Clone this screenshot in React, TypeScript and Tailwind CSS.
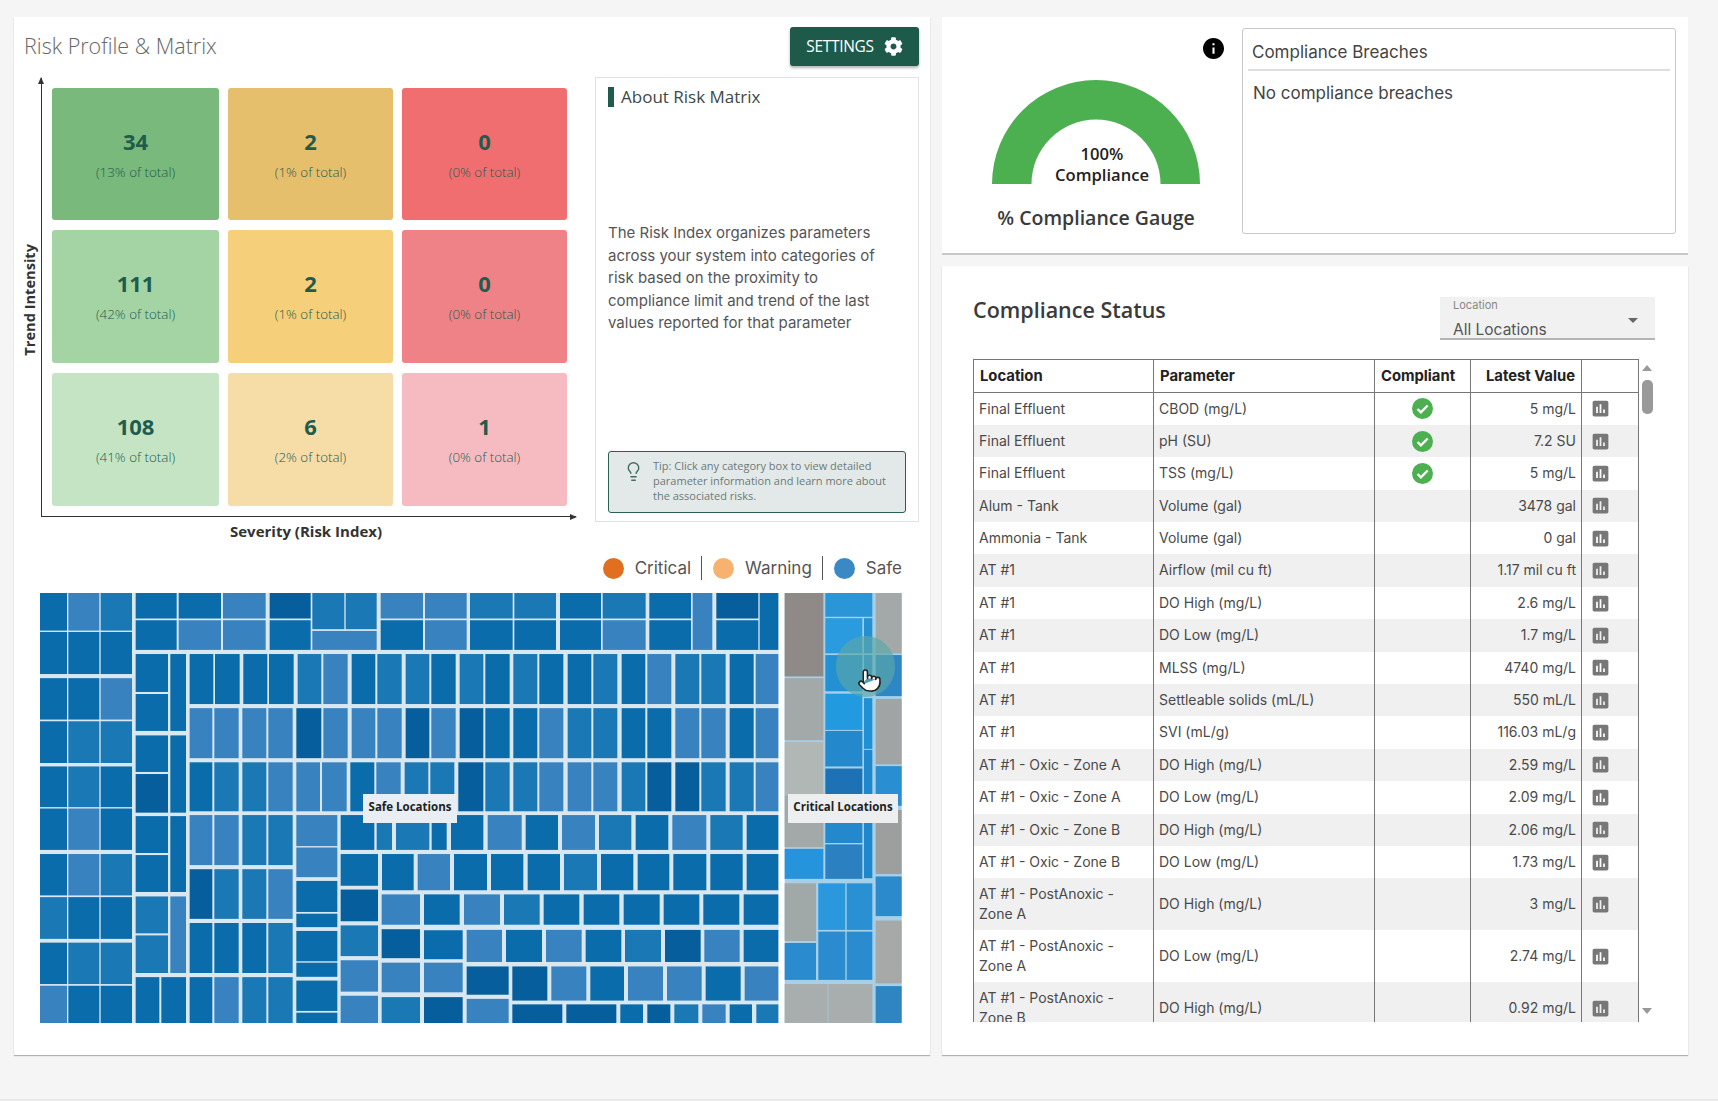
import { Lightbulb, Pointer } from 'lucide-react'
import { FaCog } from 'react-icons/fa'

/* ── Risk matrix data ── */

const matrix = [
  { value: '34', note: '(13% of total)', bg: 'bg-[#79b97b]' },
  { value: '2', note: '(1% of total)', bg: 'bg-[#e6bf6c]' },
  { value: '0', note: '(0% of total)', bg: 'bg-[#f16e70]' },
  { value: '111', note: '(42% of total)', bg: 'bg-[#a4d4a4]' },
  { value: '2', note: '(1% of total)', bg: 'bg-[#f6cf7a]' },
  { value: '0', note: '(0% of total)', bg: 'bg-[#ef8286]' },
  { value: '108', note: '(41% of total)', bg: 'bg-[#c4e4c4]' },
  { value: '6', note: '(2% of total)', bg: 'bg-[#f6dda8]' },
  { value: '1', note: '(0% of total)', bg: 'bg-[#f6bbc0]' },
]

/* ── Treemap data, in chart units (3 per px across, 2.9 per px down) ── */

const shades: Record<string, string> = {
  d: '#0a6cab',
  D: '#065f9c',
  m: '#1a78b5',
  l: '#3883bf',
}

type Tile = [number, number, number, number, string]
type Cell = [number, number, string]

const row = (y0: number, y1: number, cells: Cell[], off = 0): Tile[] =>
  cells.map(([x0, x1, c]) => [x0 + off, x1 + off, y0, y1, c])

const R = 1380

const safeTiles: Tile[] = [
  // left block
  ...row(153, 262, [[120, 201, 'd'], [205, 298, 'l'], [302, 396, 'm']]),
  ...row(266, 388, [[120, 201, 'd'], [205, 298, 'd'], [302, 396, 'd']]),
  ...row(400, 520, [[120, 201, 'd'], [205, 298, 'd'], [302, 396, 'l']]),
  ...row(525, 646, [[120, 201, 'd'], [205, 298, 'm'], [302, 396, 'm']]),
  ...row(656, 774, [[120, 201, 'd'], [205, 298, 'm'], [302, 396, 'd']]),
  ...row(778, 898, [[120, 201, 'd'], [205, 298, 'l'], [302, 396, 'd']]),
  ...row(910, 1030, [[120, 201, 'd'], [205, 298, 'l'], [302, 396, 'm']]),
  ...row(1035, 1156, [[120, 201, 'm'], [205, 298, 'd'], [302, 396, 'd']]),
  ...row(1167, 1287, [[120, 201, 'd'], [205, 298, 'm'], [302, 396, 'm']]),
  ...row(1292, 1400, [[120, 201, 'l'], [205, 298, 'd'], [302, 396, 'd']]),
  // top band
  ...row(153, 227, [[407, 530, 'd'], [536, 663, 'd'], [669, 797, 'l'], [809, 932, 'D'], [1142, 1269, 'l'], [1275, 1400, 'l']]),
  ...row(232, 318, [[407, 530, 'd'], [536, 663, 'l'], [669, 797, 'l'], [809, 932, 'd'], [1142, 1269, 'd'], [1275, 1400, 'l']]),
  ...row(153, 258, [[937, 1033, 'm'], [1037, 1130, 'm']]),
  ...row(263, 318, [[937, 1130, 'l']]),
  ...row(153, 227, [[30, 158, 'm'], [163, 288, 'm'], [300, 423, 'd'], [428, 557, 'm'], [568, 693, 'd'], [769, 895, 'D']], R),
  ...row(232, 318, [[30, 158, 'd'], [163, 288, 'd'], [300, 423, 'd'], [428, 557, 'l'], [568, 693, 'd'], [769, 895, 'd']], R),
  ...row(153, 318, [[698, 757, 'l'], [899, 955, 'd']], R),
  // narrow stack beside the left block
  ...row(330, 440, [[407, 504, 'd']]),
  ...row(446, 553, [[407, 504, 'd']]),
  ...row(330, 553, [[511, 558, 'd']]),
  ...row(566, 672, [[407, 504, 'd']]),
  ...row(678, 790, [[407, 504, 'D']]),
  ...row(566, 790, [[511, 558, 'd']]),
  ...row(800, 907, [[407, 504, 'd']]),
  ...row(913, 1020, [[407, 504, 'd']]),
  ...row(800, 1020, [[511, 558, 'd']]),
  ...row(1033, 1140, [[407, 504, 'm']]),
  ...row(1146, 1255, [[407, 504, 'm']]),
  ...row(1033, 1255, [[511, 558, 'l']]),
  ...row(1267, 1400, [[407, 478, 'd'], [484, 558, 'd']]),
  // tall pairs
  ...row(330, 475, [[569, 640, 'd'], [645, 719, 'd'], [730, 802, 'd'], [807, 881, 'd'], [893, 964, 'm'], [970, 1043, 'l'], [1055, 1126, 'd'], [1132, 1205, 'm'], [1217, 1288, 'm'], [1294, 1367, 'd']]),
  ...row(330, 475, [[-1, 70, 'm'], [76, 149, 'd'], [160, 232, 'm'], [238, 310, 'd'], [323, 394, 'd'], [400, 472, 'm'], [485, 556, 'd'], [562, 634, 'l'], [646, 718, 'm'], [724, 797, 'm'], [809, 881, 'd'], [887, 955, 'l']], R),
  ...row(487, 632, [[569, 637, 'l'], [643, 716, 'l'], [727, 799, 'l'], [805, 878, 'l'], [889, 964, 'D'], [970, 1043, 'l'], [1055, 1126, 'l'], [1132, 1205, 'l'], [1217, 1288, 'D'], [1294, 1367, 'l']]),
  ...row(487, 632, [[-1, 70, 'D'], [76, 149, 'd'], [160, 232, 'd'], [238, 310, 'l'], [323, 394, 'm'], [400, 472, 'm'], [485, 556, 'd'], [562, 634, 'd'], [646, 718, 'l'], [724, 797, 'l'], [809, 881, 'd'], [887, 955, 'l']], R),
  ...row(644, 786, [[569, 637, 'd'], [643, 716, 'm'], [727, 799, 'm'], [805, 878, 'l'], [889, 960, 'l'], [966, 1040, 'l'], [1051, 1123, 'd'], [1129, 1202, 'l'], [1214, 1285, 'm'], [1291, 1363, 'm']]),
  ...row(644, 786, [[-5, 70, 'D'], [76, 149, 'm'], [160, 232, 'm'], [238, 310, 'l'], [323, 394, 'l'], [400, 472, 'l'], [485, 556, 'm'], [562, 634, 'D'], [646, 718, 'D'], [724, 797, 'm'], [809, 881, 'm'], [887, 955, 'l']], R),
  ...row(797, 942, [[569, 637, 'l'], [643, 716, 'l'], [727, 799, 'm'], [805, 878, 'm']]),
  ...row(954, 1098, [[569, 637, 'D'], [643, 716, 'm'], [727, 799, 'm'], [805, 878, 'l']]),
  ...row(1110, 1255, [[569, 637, 'd'], [643, 716, 'd'], [727, 799, 'd'], [805, 878, 'm']]),
  ...row(1267, 1400, [[569, 637, 'd'], [643, 716, 'l'], [727, 799, 'm'], [805, 878, 'm']]),
  // single column
  ...row(797, 887, [[889, 1012, 'l']]),
  ...row(891, 977, [[889, 1012, 'l']]),
  ...row(988, 1078, [[889, 1012, 'd']]),
  ...row(1083, 1122, [[889, 1012, 'd']]),
  ...row(1133, 1221, [[889, 1012, 'd']]),
  ...row(1225, 1266, [[889, 1012, 'd']]),
  ...row(1277, 1365, [[889, 1012, 'd']]),
  ...row(1370, 1400, [[889, 1012, 'd']]),
  // small squares, lower right
  ...row(797, 898, [[1022, 1123, 'd'], [1130, 1176, 'm'], [1188, 1288, 'm'], [1295, 1340, 'd'], [1353, 1450, 'd']]),
  ...row(797, 898, [[83, 185, 'l'], [197, 294, 'd'], [306, 405, 'l'], [417, 514, 'm'], [527, 625, 'd'], [637, 739, 'l'], [751, 848, 'm'], [860, 955, 'd']], R),
  ...row(910, 1015, [[1146, 1241, 'd'], [1253, 1350, 'l'], [1362, 1461, 'd']]),
  ...row(910, 1015, [[93, 190, 'd'], [203, 300, 'd'], [312, 411, 'm'], [423, 520, 'd'], [533, 628, 'd'], [640, 739, 'd'], [751, 848, 'd'], [860, 955, 'd']], R),
  ...row(910, 1002, [[1022, 1134, 'd']]),
  ...row(1013, 1105, [[1022, 1134, 'D']]),
  ...row(1117, 1206, [[1022, 1134, 'm']]),
  ...row(1218, 1309, [[1022, 1134, 'l']]),
  ...row(1321, 1400, [[1022, 1134, 'l']]),
  ...row(1027, 1115, [[1145, 1260, 'l'], [1272, 1379, 'd']]),
  ...row(1027, 1115, [[12, 120, 'l'], [132, 239, 'm'], [251, 358, 'd'], [371, 478, 'd'], [491, 599, 'd'], [611, 718, 'd'], [730, 838, 'd'], [851, 955, 'd']], R),
  ...row(1128, 1212, [[1145, 1260, 'D']]),
  ...row(1131, 1215, [[1272, 1388, 'd']]),
  ...row(1130, 1223, [[20, 126, 'l'], [138, 246, 'd'], [258, 365, 'l'], [377, 484, 'd'], [495, 603, 'm'], [615, 722, 'D'], [733, 839, 'l'], [851, 955, 'd']], R),
  ...row(1225, 1311, [[1145, 1260, 'l'], [1272, 1388, 'l']]),
  ...row(1236, 1318, [[20, 146, 'D']], R),
  ...row(1236, 1335, [[157, 262, 'D'], [274, 379, 'l'], [391, 492, 'd'], [504, 609, 'l'], [621, 725, 'l'], [737, 842, 'd'], [854, 955, 'l']], R),
  ...row(1325, 1400, [[1145, 1260, 'm'], [1272, 1388, 'D']]),
  ...row(1330, 1400, [[20, 146, 'l']], R),
  ...row(1346, 1400, [[157, 307, 'D'], [319, 469, 'D'], [481, 549, 'd'], [562, 631, 'D'], [643, 715, 'm'], [727, 797, 'l'], [809, 876, 'd'], [889, 955, 'm']], R),
]

const criticalTiles: Tile[] = [
  ...row(153, 395, [[974, 1090, '#8f8a88']], R),
  ...row(400, 580, [[974, 1090, '#a3a9a9']], R),
  ...row(585, 740, [[974, 1090, '#b0b7b4']], R),
  ...row(740, 890, [[974, 1090, '#a3a8a8']], R),
  ...row(895, 982, [[974, 1090, '#2594dc']], R),
  ...row(153, 222, [[1096, 1237, '#2a96d8']], R),
  ...row(226, 328, [[1096, 1207, '#2b9be0'], [1212, 1237, '#2590d0']], R),
  ...row(333, 438, [[1096, 1207, '#2390d4'], [1212, 1237, '#2590d0']], R),
  ...row(153, 328, [[1247, 1325, '#a2a9a8']], R),
  ...row(333, 452, [[1247, 1325, '#2f86c4']], R),
  ...row(445, 550, [[1096, 1207, '#229ae0']], R),
  ...row(458, 605, [[1212, 1237, '#2090d4']], R),
  ...row(553, 656, [[1096, 1207, '#2388cc']], R),
  ...row(608, 980, [[1212, 1237, '#1f88cc']], R),
  ...row(662, 760, [[1096, 1207, '#1c72b4']], R),
  ...row(770, 878, [[1096, 1207, '#2388cc']], R),
  ...row(882, 982, [[1096, 1207, '#2a80c0']], R),
  ...row(460, 650, [[1247, 1325, '#a0a4a4']], R),
  ...row(655, 770, [[1247, 1325, '#2a8fd2']], R),
  ...row(782, 968, [[1247, 1325, '#9c9f9e']], R),
  ...row(975, 1090, [[1247, 1325, '#2a8acc']], R),
  ...row(1103, 1285, [[1247, 1325, '#a7a9a9']], R),
  ...row(1293, 1400, [[1247, 1325, '#2f84c2']], R),
  ...row(995, 1162, [[974, 1068, '#a0a8a8']], R),
  ...row(1168, 1275, [[974, 1068, '#2a8ccf']], R),
  ...row(995, 1130, [[1075, 1156, '#2b98de'], [1160, 1237, '#2a90d4']], R),
  ...row(1135, 1275, [[1075, 1156, '#2a8ccf'], [1160, 1237, '#2a8ccf']], R),
  ...row(1287, 1400, [[974, 1103, '#a8aeae'], [1105, 1237, '#a8aeae']], R),
]

/* ── Compliance table data ── */

const rows = [
  ['Final Effluent', 'CBOD (mg/L)', true, '5 mg/L'],
  ['Final Effluent', 'pH (SU)', true, '7.2 SU'],
  ['Final Effluent', 'TSS (mg/L)', true, '5 mg/L'],
  ['Alum - Tank', 'Volume (gal)', false, '3478 gal'],
  ['Ammonia - Tank', 'Volume (gal)', false, '0 gal'],
  ['AT #1', 'Airflow (mil cu ft)', false, '1.17 mil cu ft'],
  ['AT #1', 'DO High (mg/L)', false, '2.6 mg/L'],
  ['AT #1', 'DO Low (mg/L)', false, '1.7 mg/L'],
  ['AT #1', 'MLSS (mg/L)', false, '4740 mg/L'],
  ['AT #1', 'Settleable solids (mL/L)', false, '550 mL/L'],
  ['AT #1', 'SVI (mL/g)', false, '116.03 mL/g'],
  ['AT #1 - Oxic - Zone A', 'DO High (mg/L)', false, '2.59 mg/L'],
  ['AT #1 - Oxic - Zone A', 'DO Low (mg/L)', false, '2.09 mg/L'],
  ['AT #1 - Oxic - Zone B', 'DO High (mg/L)', false, '2.06 mg/L'],
  ['AT #1 - Oxic - Zone B', 'DO Low (mg/L)', false, '1.73 mg/L'],
  ['AT #1 - PostAnoxic - Zone A', 'DO High (mg/L)', false, '3 mg/L'],
  ['AT #1 - PostAnoxic - Zone A', 'DO Low (mg/L)', false, '2.74 mg/L'],
  ['AT #1 - PostAnoxic - Zone B', 'DO High (mg/L)', false, '0.92 mg/L'],
] as const

/* ── Small drawings ── */

function ChartIcon() {
  return (
    <svg viewBox="0 0 24 24" className="size-[21px] fill-[#777]">
      <path d="M19 3H5c-1.1 0-2 .9-2 2v14c0 1.1.9 2 2 2h14c1.1 0 2-.9 2-2V5c0-1.1-.9-2-2-2zM9 17H7v-7h2v7zm4 0h-2V7h2v10zm4 0h-2v-4h2v4z" />
    </svg>
  )
}

function CheckIcon() {
  return (
    <svg viewBox="0 0 21 21" className="mx-auto size-[21px]">
      <circle cx="10.5" cy="10.5" r="10.5" fill="#4caf50" />
      <path d="M5.5 11l3.4 3.3 6.8-6.8" fill="none" stroke="#fff" strokeWidth="2.4" />
    </svg>
  )
}

function Gauge() {
  return (
    <svg viewBox="0 0 208 105" className="h-[105px] w-[208px]">
      <path d="M0 105A104 104 0 0 1 208 105H168.5A64.5 64.5 0 0 0 39.5 105Z" fill="#4caf50" />
    </svg>
  )
}

/* ── Left card ── */

function RiskMatrix() {
  return (
    <div className="mt-px flex flex-col pl-[7px]">
      <div className="flex">
        <div className="flex w-5 items-center justify-start pt-[5px]">
          <span className="rotate-180 text-[14.6px] leading-4 font-bold text-[#333] [writing-mode:vertical-rl]">
            Trend Intensity
          </span>
        </div>
        <div className="relative h-[439px] w-[535px] border-b border-l border-[#333] pt-2.5 pl-2.5">
          <span className="absolute -top-[1px] -left-[4px] border-x-[3.5px] border-b-[7px] border-x-transparent border-b-[#333]" />
          <span className="absolute -right-[1px] -bottom-[4px] border-y-[3.5px] border-l-[7px] border-y-transparent border-l-[#333]" />
          <div className="grid grid-cols-[167px_165px_165px] grid-rows-[132px_133px_133px] gap-x-[9px] gap-y-2.5">
            {matrix.map((cell, i) => (
              <div key={i} className={`${cell.bg} flex flex-col items-center rounded-[3px] pt-[38px] text-[#1f5c4d]`}>
                <span className="text-[22px] leading-[30px] font-bold">{cell.value}</span>
                <span className="mt-2 text-[13.4px] leading-4 font-light">{cell.note}</span>
              </div>
            ))}
          </div>
        </div>
      </div>
      <div className="ml-5 w-[530px] pt-1 text-center text-[15px] leading-5 font-bold text-[#333]">
        Severity (Risk Index)
      </div>
    </div>
  )
}

function AboutPanel() {
  return (
    <div className="ml-[19px] flex h-[445px] w-[324px] flex-col border border-[#e2e2e2] px-[12px] pt-[9px] pb-2">
      <div className="flex h-5 items-center gap-[7px]">
        <span className="h-5 w-1.5 bg-[#1f5c4d]" />
        <span className="text-[17px] text-[#3c4a46]">About Risk Matrix</span>
      </div>
      <p className="mt-[115px] w-[282px] font-['Inter'] text-[15px] leading-[22.6px] text-[#555]">
        The Risk Index organizes parameters across your system into categories of risk based on the
        proximity to compliance limit and trend of the last values reported for that parameter
      </p>
      <div className="mt-auto flex h-[62px] items-start gap-[9px] rounded-[3px] border border-[#2b5f55] bg-[#e3e9e8] pt-[6px] pl-[14px]">
        <Lightbulb size={21} strokeWidth={1.6} className="mt-[3px] shrink-0 text-[#3c6e62]" />
        <p className="w-[234px] text-[11px] leading-[15px] text-[#6c7a78]">
          Tip: Click any category box to view detailed parameter information and learn more about
          the associated risks.
        </p>
      </div>
    </div>
  )
}

function Legend() {
  const items = [
    { label: 'Critical', dot: 'bg-[#e07020]' },
    { label: 'Warning', dot: 'bg-[#f8b26f]' },
    { label: 'Safe', dot: 'bg-[#3a88c4]' },
  ]
  return (
    <div className="mt-[15px] flex h-6 justify-end pr-[28px] font-['Inter'] text-[17px] leading-6 text-[#555]">
      {items.map((item, i) => (
        <div key={item.label} className={`flex items-center gap-[11px] ${i > 0 ? 'ml-[10px] border-l border-[#555] pl-[11px]' : ''}`}>
          <span className={`${item.dot} size-[21px] rounded-full`} />
          <span>{item.label}</span>
        </div>
      ))}
    </div>
  )
}

function Treemap() {
  return (
    <div className="relative mt-[13px] ml-[26px] h-[430px] w-[862px]">
      <svg viewBox="120 153 2586 1247" preserveAspectRatio="none" className="block h-[430px] w-[862px]">
        <rect x="120" y="153" width="2216" height="1247" fill="#d9e7f0" />
        <rect x="2354" y="153" width="351" height="1247" fill="#a6cfe8" />
        {safeTiles.map(([x0, x1, y0, y1, c], i) => (
          <rect key={i} x={x0} y={y0} width={x1 - x0} height={y1 - y0} fill={shades[c]} />
        ))}
        {criticalTiles.map(([x0, x1, y0, y1, c], i) => (
          <rect key={i} x={x0} y={y0} width={x1 - x0} height={y1 - y0} fill={c} />
        ))}
      </svg>
      <span className="absolute top-[201px] left-[323px] flex h-[29px] w-[94px] items-center justify-center bg-[#e8eef3] pb-[3px] text-[11.5px] font-bold text-[#222]">
        Safe Locations
      </span>
      <span className="absolute top-[201px] left-[748px] flex h-[29px] w-[110px] items-center justify-center bg-[#eceef0] pb-[3px] text-[11.5px] font-bold text-[#222]">
        Critical Locations
      </span>
      <span className="absolute top-[43px] left-[796px] h-[61px] w-[59px] rounded-full bg-[#5aa8a8]/65" />
      <Pointer size={25} fill="#fff" strokeWidth={1.5} className="absolute top-[75px] left-[817px] text-[#222]" />
    </div>
  )
}

function RiskCard() {
  return (
    <section className="h-[1038px] w-[916px] bg-white pt-2.5 shadow-[0_1px_1px_rgba(0,0,0,0.28)]">
      <div className="flex items-center justify-between pr-[11px] pl-2.5">
        <h1 className="text-[21.5px] font-light text-[#666]">Risk Profile &amp; Matrix</h1>
        <button className="flex h-[39px] w-[129px] items-center justify-center gap-[10px] rounded-[3px] bg-[#1d5a4a] text-[15.5px] tracking-[-0.3px] text-white shadow-[0_2px_3px_rgba(0,0,0,0.3)]">
          SETTINGS
          <FaCog size={19} />
        </button>
      </div>
      <div className="mt-[11px] flex items-start">
        <RiskMatrix />
        <AboutPanel />
      </div>
      <Legend />
      <Treemap />
    </section>
  )
}

/* ── Right cards ── */

function GaugeCard() {
  return (
    <section className="flex h-[238px] w-[746px] border-b-2 border-[#c9c9c9] bg-white pt-[11px]">
      <div className="flex w-[300px] flex-col">
        <div className="mt-[10px] flex justify-end pr-[18px]">
          <svg viewBox="2 2 20 20" className="size-[21px] fill-black">
            <path d="M12 2C6.48 2 2 6.48 2 12s4.48 10 10 10 10-4.48 10-10S17.52 2 12 2zm1 15h-2v-6h2v6zm0-8h-2V7h2v2z" />
          </svg>
        </div>
        <div className="relative mt-[20px] ml-[50px] h-[105px] w-[208px]">
          <Gauge />
          <div className="absolute top-[65px] left-[6px] w-[208px] text-center text-[16.6px] leading-[20.5px] font-semibold text-[#222]">
            100%
            <br />
            Compliance
          </div>
        </div>
        <div className="mt-[19px] ml-[50px] w-[208px] text-center text-[19.5px] font-semibold whitespace-nowrap text-[#3a3a3a]">
          % Compliance Gauge
        </div>
      </div>
      <div className="h-[206px] w-[434px] rounded-[3px] border border-[#c8c8c8] px-[5px] pt-[11px] font-['Inter'] text-[17px] text-[#444]">
        <div className="border-b-2 border-[#dedede] px-1 pb-[5px] leading-[24px]">Compliance Breaches</div>
        <div className="mt-2.5 px-[5px] leading-[24px]">No compliance breaches</div>
      </div>
    </section>
  )
}

function StatusTable() {
  const head = 'border-t border-b border-r border-[#777] px-[6px] text-[14.8px] font-bold text-[#222]'
  const cell = 'border-r border-[#777] px-[5px]'
  return (
    <div className="mt-[19px] flex">
      <div className="h-[663px] w-[666px] overflow-hidden">
        <table className="w-[665px] table-fixed border-collapse border-l border-[#777] font-['Inter'] text-[14px] leading-[20.5px] text-[#4a4a4a]">
          <colgroup>
            <col className="w-[180px]" />
            <col className="w-[221px]" />
            <col className="w-[96px]" />
            <col className="w-[111px]" />
            <col className="w-[57px]" />
          </colgroup>
          <thead>
            <tr className="h-[33px]">
              <th className={`${head} text-left`}>Location</th>
              <th className={`${head} text-left`}>Parameter</th>
              <th className={`${head} text-left`}>Compliant</th>
              <th className={`${head} text-right`}>Latest Value</th>
              <th className={head} />
            </tr>
          </thead>
          <tbody>
            {rows.map(([location, parameter, ok, latest], i) => (
              <tr key={i} className={`${i % 2 === 1 ? 'bg-[#f0f0f0]' : ''} ${location.includes('PostAnoxic') ? 'h-[52px]' : 'h-[32.4px]'}`}>
                <td className={cell}>{location}</td>
                <td className={cell}>{parameter}</td>
                <td className={cell}>{ok && <CheckIcon />}</td>
                <td className={`${cell} text-right`}>{latest}</td>
                <td className={`${cell} pl-2`}>
                  <ChartIcon />
                </td>
              </tr>
            ))}
          </tbody>
        </table>
      </div>
      <div className="ml-[2px] flex h-[663px] w-3 flex-col items-center pt-1.5">
        <span className="border-x-[5px] border-b-[6px] border-x-transparent border-b-[#999]" />
        <span className="mt-[9px] h-[34px] w-[11px] rounded-[5px] bg-[#999]" />
        <span className="mt-auto mb-2 border-x-[5px] border-t-[6px] border-x-transparent border-t-[#999]" />
      </div>
    </div>
  )
}

function StatusCard() {
  return (
    <section className="h-[789px] w-[746px] bg-white pt-[31px] pl-[31px] shadow-[0_1px_1px_rgba(0,0,0,0.28)]">
      <div className="flex items-start justify-between pr-[33px]">
        <h2 className="text-[21.5px] leading-[26px] font-semibold text-[#3a3a3a]">Compliance Status</h2>
        <div className="relative h-[43px] w-[215px] border-b-2 border-[#b5b5b5] bg-[#f1f1f1] px-[13px] pt-[1px] font-['Inter'] text-[#555]">
          <div className="text-[11px] leading-[15px] text-[#888]">Location</div>
          <div className="mt-[7px] text-[15.5px] leading-5">All Locations</div>
          <span className="absolute top-[21px] right-[17px] border-x-[5px] border-t-[5px] border-x-transparent border-t-[#666]" />
        </div>
      </div>
      <StatusTable />
    </section>
  )
}

export default function App() {
  return (
    <main className="flex h-[1101px] gap-3 border-b-2 border-[#e9e9e9] bg-[#f5f5f5] pt-[17px] pl-[14px] font-['Open_Sans',sans-serif]">
      <RiskCard />
      <div className="flex flex-col gap-[11px]">
        <GaugeCard />
        <StatusCard />
      </div>
    </main>
  )
}
